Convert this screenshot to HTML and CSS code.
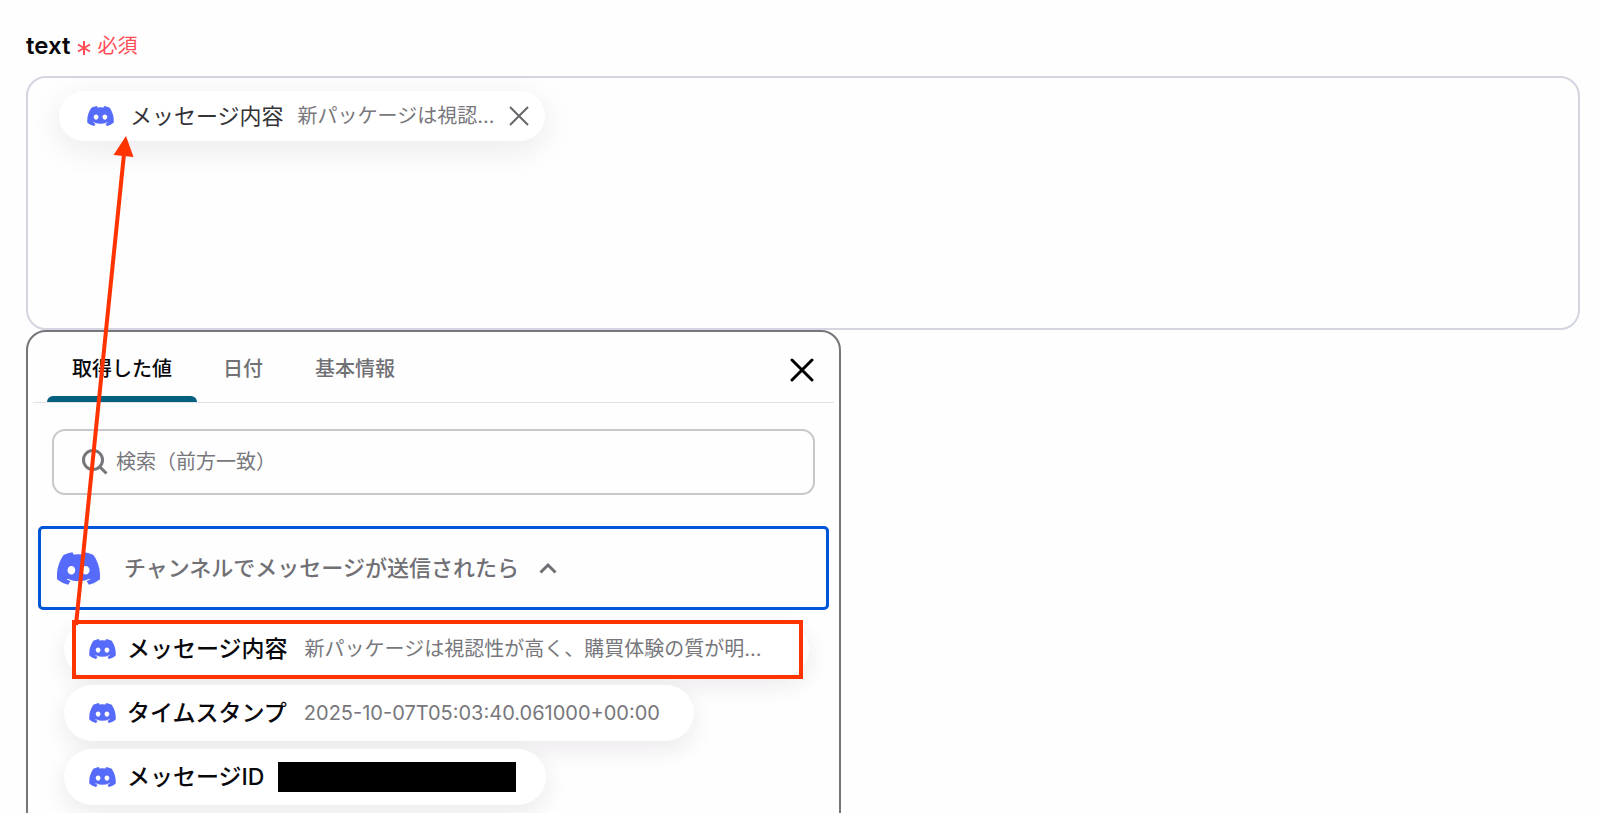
FILE: index.html
```html
<!DOCTYPE html>
<html lang="ja">
<head>
    <meta charset="utf-8" />
    <meta name="viewport" content="width=device-width, initial-scale=1" />
    <title>text</title>
    <link rel="stylesheet" href="styles.css">
</head>
<body>
    <!-- shared icon -->
    <svg class="sprite" aria-hidden="true">
        <symbol id="discord" viewBox="0 0 127 96">
            <path d="M107.7 8.07A105.15 105.15 0 0 0 81.47 0a72.06 72.06 0 0 0-3.36 6.83 97.68 97.68 0 0 0-29.11 0A72.37 72.37 0 0 0 45.64 0a105.89 105.89 0 0 0-26.25 8.09C2.79 32.65-1.71 56.6.54 80.21a105.73 105.73 0 0 0 32.17 16.15 77.7 77.7 0 0 0 6.89-11.11 68.42 68.42 0 0 1-10.85-5.18c.91-.66 1.8-1.34 2.66-2a75.57 75.57 0 0 0 64.32 0c.87.71 1.76 1.39 2.66 2a68.68 68.68 0 0 1-10.87 5.19 77 77 0 0 0 6.89 11.1 105.25 105.25 0 0 0 32.19-16.14c2.64-27.38-4.51-51.11-18.9-72.15ZM42.45 65.69C36.18 65.69 31 60 31 53s5-12.74 11.43-12.74S54 46 53.89 53s-5.05 12.69-11.44 12.69Zm42.24 0C78.41 65.69 73.25 60 73.25 53s5-12.74 11.44-12.74S96.23 46 96.12 53s-5.04 12.69-11.43 12.69Z"/>
        </symbol>
    </svg>

    <main class="page">
        <div class="label-row">
            <span class="label" id="field-label">text</span>
            <svg class="asterisk" viewBox="0 0 14 16" aria-hidden="true"><path d="M7 1v14M1 4.5l12 7M13 4.5l-12 7"/></svg>
            <span class="required">必須</span>
        </div>

        <div class="field" role="textbox" aria-multiline="true" aria-labelledby="field-label" tabindex="0">
            <div class="chip">
                <svg class="icon"><use href="#discord"/></svg>
                <span class="chip-name">メッセージ内容</span>
                <span class="value">新パッケージは視認...</span>
                <button class="chip-remove" type="button" aria-label="削除">
                    <svg viewBox="0 0 20 20"><path d="M1 1l18 18M19 1L1 19"/></svg>
                </button>
            </div>
        </div>

        <section class="panel">
            <div class="tabs" role="tablist">
                <button class="tab active" type="button" role="tab" aria-selected="true">取得した値</button>
                <button class="tab" type="button" role="tab">日付</button>
                <button class="tab" type="button" role="tab">基本情報</button>
                <button class="close" type="button" aria-label="閉じる">
                    <svg viewBox="0 0 24 24"><path d="M2 2l20 20M22 2L2 22"/></svg>
                </button>
            </div>

            <label class="search">
                <svg viewBox="0 0 26 26" aria-hidden="true"><circle cx="11" cy="11" r="9.5"/><path d="M17.5 17.5l7 7"/></svg>
                <input type="text" placeholder="検索（前方一致）" aria-label="検索（前方一致）">
            </label>

            <button class="group" type="button" aria-expanded="true">
                <svg class="group-icon"><use href="#discord"/></svg>
                <span>チャンネルでメッセージが送信されたら</span>
                <svg class="chevron" viewBox="0 0 18 12"><path d="M1.5 10.5L9 3l7.5 7.5"/></svg>
            </button>

            <div class="items">
                <button class="item wide" type="button">
                    <svg class="icon"><use href="#discord"/></svg>
                    <span class="item-name">メッセージ内容</span>
                    <span class="value">新パッケージは視認性が高く、購買体験の質が明...</span>
                </button>
                <button class="item" type="button">
                    <svg class="icon"><use href="#discord"/></svg>
                    <span class="item-name">タイムスタンプ</span>
                    <span class="value">2025-10-07T05:03:40.061000+00:00</span>
                </button>
                <button class="item masked" type="button">
                    <svg class="icon"><use href="#discord"/></svg>
                    <span class="item-name">メッセージID</span>
                    <span class="mask"></span>
                </button>
            </div>
        </section>

        <svg class="annotation" width="830" height="700" viewBox="0 0 830 700" aria-hidden="true">
            <rect x="74" y="622" width="727" height="55"/>
            <path d="M76 625L124 154"/>
            <path class="head" d="M126 136l7.5 21-20-2z"/>
        </svg>
    </main>
</body>
</html>
```
FILE: styles.css
```css
* {
    box-sizing: border-box;
}
body {
    margin: 0;
    background: #fefefe;
    color: #08080c;
    font-family: Inter, "Noto Sans CJK JP", sans-serif;
    line-height: 28px;
}
button {
    margin: 0;
    padding: 0;
    border: none;
    background: none;
    color: inherit;
    font: inherit;
    cursor: pointer;
}
svg {
    display: block;
    flex: none;
}
.sprite {
    position: absolute;
    width: 0;
    height: 0;
}
.page {
    position: relative;
    height: 100vh;
    overflow: hidden;
    padding: 32px 20px 0 26px;
}
.label-row {
    display: flex;
    align-items: center;
    height: 28px;
    margin-bottom: 16px;
}
.label {
    font-size: 24px;
    font-weight: 600;
}
.asterisk {
    width: 14px;
    height: 16px;
    margin: 4px 6px 0 7px;
    fill: none;
    stroke: #ff4d58;
    stroke-width: 2;
}
.required {
    color: #ff4d58;
    font-size: 20px;
}
.field {
    min-height: 254px;
    padding: 13px 31px;
    border: 2px solid #d3d5e0;
    border-radius: 20px;
}
.chip {
    display: inline-flex;
    align-items: center;
    height: 50px;
    padding: 0 16px 0 28px;
    border-radius: 25px;
    background: #fff;
    box-shadow: 0 8px 32px rgba(60, 20, 60, 0.09);
    white-space: nowrap;
}
.icon {
    width: 27px;
    height: 20px;
    fill: #566bfa;
}
.chip-name {
    margin: 0 14px 0 16px;
    color: #333338;
    font-size: 22px;
}
.value {
    color: #77777c;
    font-size: 20px;
}
.chip-remove {
    margin-left: 15px;
}
.chip-remove svg {
    width: 20px;
    height: 20px;
    fill: none;
    stroke: #66666b;
    stroke-width: 2;
}
.panel {
    max-width: 815px;
    height: 520px;
    padding: 0 5px;
    border: 2px solid #75757a;
    border-radius: 20px;
    background: #fefefe;
}
.tabs {
    display: flex;
    height: 71px;
    padding: 0 20px 0 14px;
    border-bottom: 1px solid #e2e2e6;
}
.tab {
    position: relative;
    padding: 4px 26px 0;
    color: #707075;
    font-size: 20px;
    font-weight: 500;
}
.active {
    padding: 4px 25px 0;
    color: #08080c;
}
.active::after {
    content: "";
    position: absolute;
    left: 0;
    right: 0;
    bottom: 0;
    height: 6px;
    border-radius: 6px 6px 0 0;
    background: #056080;
}
.close {
    margin-left: auto;
}
.close svg {
    width: 24px;
    height: 24px;
    margin-top: 6px;
    fill: none;
    stroke: #000;
    stroke-width: 3;
    stroke-linecap: round;
}
.search {
    display: flex;
    align-items: center;
    height: 66px;
    margin: 26px 19px 31px;
    padding: 0 28px;
    border: 2px solid #c8c8cc;
    border-radius: 13px;
}
.search svg {
    width: 26px;
    height: 26px;
    fill: none;
    stroke: #75757a;
    stroke-width: 3;
}
.search input {
    flex: 1;
    min-width: 0;
    margin-left: 8px;
    padding: 0;
    border: none;
    outline: none;
    background: none;
    font-family: inherit;
    font-size: 20px;
}
.search input::placeholder {
    color: #77777c;
}
.group {
    display: flex;
    align-items: center;
    width: calc(100% - 10px);
    height: 84px;
    margin: 0 5px 11px;
    padding: 0 16px;
    border: 3px solid #0055d8;
    border-radius: 5px;
    color: #707075;
    font-size: 22px;
    font-weight: 500;
}
.group-icon {
    width: 43px;
    height: 33px;
    margin-right: 24px;
    fill: #566bfa;
}
.chevron {
    width: 18px;
    height: 12px;
    margin-left: 20px;
    fill: none;
    stroke: #707075;
    stroke-width: 3;
}
.items {
    display: flex;
    flex-direction: column;
    align-items: flex-start;
    gap: 8px;
    padding-left: 31px;
}
.item {
    display: flex;
    align-items: center;
    height: 56px;
    padding: 0 34px 0 25px;
    border-radius: 28px;
    background: #fff;
    box-shadow: 0 8px 24px rgba(60, 20, 60, 0.09);
    white-space: nowrap;
}
.item-name {
    margin: 0 17px 0 11px;
    font-size: 23px;
    font-weight: 500;
}
.wide {
    padding-right: 48px;
}
.masked {
    padding-right: 30px;
}
.masked .item-name {
    margin-right: 14px;
}
.mask {
    width: 238px;
    height: 30px;
    background: #000;
}
/* arrow and frame drawn over the form */
.annotation {
    position: absolute;
    top: 0;
    left: 0;
    pointer-events: none;
    fill: none;
    stroke: #ff3300;
    stroke-width: 4;
}
.annotation .head {
    fill: #ff3300;
    stroke: none;
}
```
